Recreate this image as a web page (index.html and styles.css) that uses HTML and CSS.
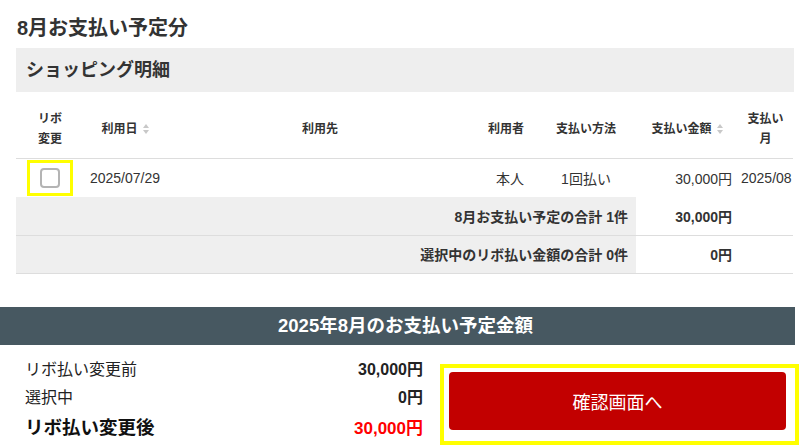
FILE: index.html
```html
<html lang="ja">
    <head>
        <meta charset="utf-8" />
        <title>8月お支払い予定分</title>
        <link rel="stylesheet" href="styles.css">
    </head>
    <body>
        <div class="page">
            <section class="detail">
                <h2 class="month-title">8月お支払い予定分</h2>
                <div class="card-head">ショッピング明細</div>
                <table class="usage">
                    <colgroup>
                        <col class="c-revo">
                        <col class="c-date">
                        <col class="c-shop">
                        <col class="c-user">
                        <col class="c-method">
                        <col class="c-amount">
                        <col class="c-month">
                    </colgroup>
                    <tr class="head-row">
                        <th class="center">リボ<br>変更</th>
                        <th class="center">利用日<svg class="sort" width="6" height="10" viewBox="0 0 6 10"><path d="M3 0L6 4H0Z M3 10L6 6H0Z" fill="#c8c8c8"/></svg></th>
                        <th class="center">利用先</th>
                        <th class="right user">利用者</th>
                        <th class="center">支払い方法</th>
                        <th class="center">支払い金額<svg class="sort" width="6" height="10" viewBox="0 0 6 10"><path d="M3 0L6 4H0Z M3 10L6 6H0Z" fill="#c8c8c8"/></svg></th>
                        <th class="center">支払い<br>月</th>
                    </tr>
                    <tr class="data-row">
                        <td class="center"><span class="mark"><input type="checkbox" class="revo-check"></span></td>
                        <td class="center">2025/07/29</td>
                        <td></td>
                        <td class="right user">本人</td>
                        <td class="center">1回払い</td>
                        <td class="right amount">30,000円</td>
                        <td class="month">2025/08</td>
                    </tr>
                    <tr class="total-row">
                        <td colspan="5" class="total-label">8月お支払い予定の合計 1件</td>
                        <td class="right amount">30,000円</td>
                        <td></td>
                    </tr>
                    <tr class="total-row">
                        <td colspan="5" class="total-label">選択中のリボ払い金額の合計 0件</td>
                        <td class="right amount">0円</td>
                        <td></td>
                    </tr>
                </table>
            </section>

            <section class="summary">
                <div class="summary-title">2025年8月のお支払い予定金額</div>
                <div class="summary-body">
                    <div class="amounts">
                        <span class="label">リボ払い変更前</span>
                        <span class="value">30,000円</span>
                        <span class="label">選択中</span>
                        <span class="value">0円</span>
                        <span class="label after">リボ払い変更後</span>
                        <span class="value after">30,000円</span>
                    </div>
                    <div class="action">
                        <button type="button" class="confirm">確認画面へ</button>
                    </div>
                </div>
            </section>
        </div>
    </body>
</html>
```

FILE: styles.css
```css
body{
    margin: 0;
    font-family: "Liberation Sans", "Noto Sans CJK JP", sans-serif;
    color: #333;
    background: #fff;
}
.page{
    width: 800px;
    overflow: hidden;
}
.detail{
    padding: 0 6px 0 16px;
}
.month-title{
    margin: 0 0 10px;
    padding: 18px 0 0 1px;
    font-size: 20px;
    line-height: 20px;
    font-weight: bold;
    color: #333;
}
.card-head{
    height: 44px;
    line-height: 44px;
    padding-left: 10px;
    background: #eeeeee;
    font-size: 18px;
    font-weight: bold;
    color: #333;
}
.usage{
    margin-top: 8px;
    width: 777px;
    table-layout: fixed;
    border-collapse: collapse;
}
.c-revo{ width: 68px; }
.c-date{ width: 82px; }
.c-shop{ width: 308px; }
.c-user{ width: 62px; }
.c-method{ width: 100px; }
.c-amount{ width: 102px; }
.c-month{ width: 55px; }

.usage th{
    height: 58px;
    padding: 0;
    font-size: 12px;
    line-height: 20px;
    font-weight: bold;
    color: #333;
    border-bottom: 1px solid #dddddd;
}
.usage td{
    height: 38px;
    padding: 0;
    font-size: 14px;
    color: #333;
    white-space: nowrap;
}
.center{
    text-align: center;
}
.right{
    text-align: right;
}
.usage .user{
    padding-right: 12px;
}
.usage .amount{
    padding-right: 6px;
}
.usage .month{
    padding-left: 3px;
    overflow: hidden;
}
.sort{
    margin-left: 5px;
    vertical-align: -1px;
}
.usage .data-row td{
    height: 39px;
}
.mark{
    display: inline-flex;
    align-items: center;
    justify-content: center;
    box-sizing: border-box;
    width: 46px;
    height: 36px;
    border: 3px solid #ffff00;
    vertical-align: middle;
}
.revo-check{
    appearance: none;
    -webkit-appearance: none;
    margin: 0;
    width: 20px;
    height: 20px;
    box-sizing: border-box;
    border: 2px solid #b4b4b4;
    border-radius: 4px;
    background: #fff;
}
.usage .total-row td{
    height: 38px;
    border-bottom: 1px solid #dddddd;
    font-weight: bold;
}
.usage .total-label{
    background: #efefef;
    text-align: right;
    padding-right: 8px;
}

.summary{
    margin-top: 33px;
}
.summary-title{
    width: 779px;
    height: 38px;
    line-height: 38px;
    padding-left: 16px;
    background: #475861;
    color: #fff;
    font-size: 18.5px;
    font-weight: bold;
    text-align: center;
}
.summary-body{
    display: flex;
    padding-left: 25px;
}
.amounts{
    width: 398px;
    padding-top: 9px;
    display: grid;
    grid-template-columns: 1fr auto;
    grid-auto-rows: 28px;
    align-items: center;
    color: #222;
}
.amounts .label{
    font-size: 16px;
}
.amounts .value{
    font-size: 16px;
    font-weight: bold;
    text-align: right;
}
.amounts .after{
    margin-top: 5px;
}
.amounts .label.after{
    font-size: 18.5px;
    font-weight: bold;
    color: #111;
}
.amounts .value.after{
    font-size: 17px;
    color: #ff0000;
}
.action{
    margin: 19px 0 0 17px;
    width: 359px;
    height: 81px;
    box-sizing: border-box;
    border: 4px solid #ffff00;
    padding: 4px 9px 11px 5px;
}
.confirm{
    display: block;
    width: 100%;
    height: 58px;
    border: none;
    border-radius: 4px;
    background: #c20000;
    color: #fff;
    font-family: "Liberation Sans", "Noto Sans CJK JP", sans-serif;
    font-size: 18px;
}
```
